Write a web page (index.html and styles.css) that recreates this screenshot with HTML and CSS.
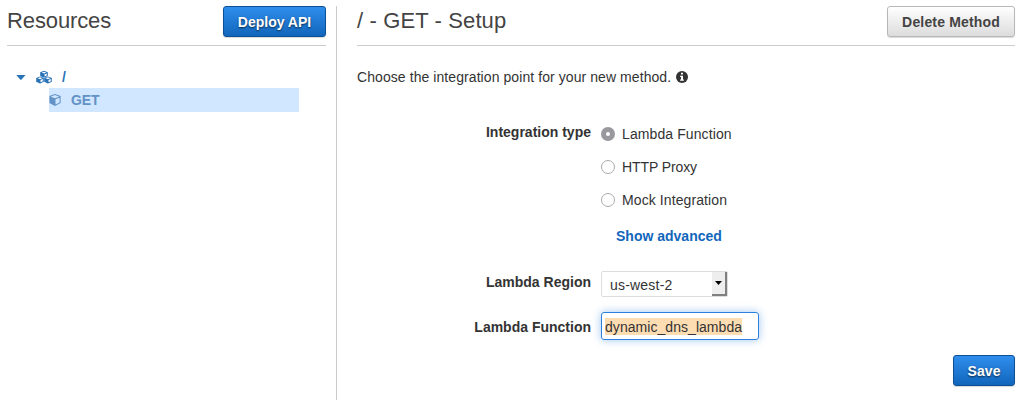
FILE: index.html
```html
<!DOCTYPE html>
<html lang="en">
<head>
<meta charset="utf-8">
<title>Method Setup</title>
<link rel="stylesheet" href="styles.css">
</head>
<body>
<div class="app">
  <aside class="sidebar">
    <header class="bar">
      <h1 class="title">Resources</h1>
      <button class="btn primary deploy">Deploy API</button>
    </header>
    <div class="tree">
      <div class="root">
        <svg class="caret" width="10" height="5" viewBox="0 0 10 5"><path d="M0.3 0h9.2L5.6 4.4q-.7.7-1.4 0z" fill="#2873b8"/></svg>
        <svg class="cubes" width="16" height="14" viewBox="0 0 16 14" fill="#2873b8" fill-rule="evenodd">
          <path d="M8 .8l3.8 1.5V6L8 7.8 4.2 6V2.3zM8 1.7L5.7 2.6 8 3.6l2.3-1zM8.5 4.4v2.1l2.3-1.1V3.4z"/>
          <path d="M4 6.4l3.8 1.5v3.9L4 13.6.2 11.8V7.9zM4 7.3L1.7 8.2 4 9.2l2.3-1zM4.5 10v2.3l2.3-1.1V9z"/>
          <path d="M12 6.4l3.8 1.5v3.9L12 13.6l-3.8-1.8V7.9zM12 7.3l-2.3.9 2.3 1 2.3-1zM12.5 10v2.3l2.3-1.1V9z"/>
        </svg>
        <span class="path">/</span>
      </div>
      <div class="method">
        <svg class="cube" width="12" height="12" viewBox="0 0 12 12" fill="#6292c6" fill-rule="evenodd"><path d="M6 0l5.6 2.1v7L6 12 .4 9.1v-7zM6 1L1.6 2.7 6 4.3l4.4-1.6zM6.5 5.2v5.4l4.1-2.1V3.7z"/></svg>
        <span>GET</span>
      </div>
    </div>
  </aside>
  <main class="main">
    <header class="bar">
      <h1 class="title setup">/ - GET - Setup</h1>
      <button class="btn plain">Delete Method</button>
    </header>
    <p class="intro"><span class="intro-text">Choose the integration point for your new method.</span>
      <svg width="12" height="12" viewBox="0 0 12 12"><circle cx="6" cy="6" r="6" fill="#333"/><path d="M5 1.8h2v1.7H5zM4.1 4.7H7v3.8h.9v1.3H4.1V8.5H5V6h-.9z" fill="#fff"/></svg>
    </p>
    <div class="form">
      <div class="row types">
        <span class="label">Integration type</span>
        <div class="options">
          <label class="option"><i class="radio on"></i><span class="wide">Lambda Function</span></label>
          <label class="option"><i class="radio"></i><span class="narrow">HTTP Proxy</span></label>
          <label class="option"><i class="radio"></i><span class="wide">Mock Integration</span></label>
          <a class="advanced">Show advanced</a>
        </div>
      </div>
      <div class="row region">
        <span class="label">Lambda Region</span>
        <div class="select"><span class="value">us-west-2</span><span class="drop"><svg width="7" height="4" viewBox="0 0 7 4"><path d="M0 0h7L3.5 4z"/></svg></span></div>
      </div>
      <div class="row function">
        <span class="label">Lambda Function</span>
        <div class="input"><span class="selected">dynamic_dns_lambda</span></div>
      </div>
    </div>
    <div class="actions"><button class="btn primary save">Save</button></div>
  </main>
</div>
</body>
</html>
```
FILE: styles.css
```css
* { box-sizing: border-box; }
body {
  margin: 0;
  background: #fff;
  color: #333;
  font: 14px/20px "Liberation Sans", Arial, sans-serif;
  white-space: nowrap;
}
.app { display: flex; height: 400px; padding: 6px 9px 0 7px; overflow: hidden; }
.sidebar { width: 330px; padding-right: 10px; border-right: 1px solid #ccc; }
.main { flex: 1; padding-left: 20px; }
.bar {
  display: flex;
  justify-content: space-between;
  align-items: flex-start;
  height: 40px;
  border-bottom: 1px solid #ccc;
}
.title { margin: 0; font-size: 22px; line-height: 30px; font-weight: 400; color: #444; letter-spacing: -.12px; }
.setup { letter-spacing: .12px; }
.btn {
  height: 31px;
  padding: 1px 0 0;
  border-radius: 3px;
  font: bold 14px/28px "Liberation Sans", Arial, sans-serif;
  text-align: center;
}
.primary {
  border: 1px solid #0d4f94;
  background: linear-gradient(#2f8eed, #1166bb);
  color: #fff;
  text-shadow: 0 1px 2px rgba(0, 0, 0, .65);
  box-shadow: 0 1px 1px rgba(0, 0, 0, .15);
}
.plain {
  width: 128px;
  border: 1px solid #b8b8b8;
  background: linear-gradient(#fff, #dcdcdc);
  color: #444;
  box-shadow: 0 1px 1px rgba(0, 0, 0, .15);
  letter-spacing: .16px;
}
.deploy { width: 103px; }
.save { width: 62px; letter-spacing: .1px; }
.tree { padding: 20px 0 0 9px; font-weight: bold; }
.root { display: flex; align-items: center; height: 22px; color: #2873b8; }
.cubes { margin: 0 10px 0 10px; }
.method {
  display: flex;
  align-items: center;
  gap: 10px;
  width: 250px;
  height: 24px;
  margin-left: 33px;
  background: #d1e7ff;
  color: #6292c6;
}
.method span { letter-spacing: -.15px; }
.intro { display: flex; align-items: center; gap: 5px; height: 20px; margin: 21px 0 0; }
.intro-text { letter-spacing: .075px; }
.form { padding-top: 35px; }
.row { display: flex; gap: 10px; }
.label { width: 234px; text-align: right; font-weight: bold; }
.types { height: 148px; }
.options { display: flex; flex-direction: column; padding-top: 2px; }
.option { display: flex; align-items: center; gap: 7px; height: 20px; margin-bottom: 13px; }
.wide { letter-spacing: .1px; }
.narrow { letter-spacing: -.1px; }
.radio { width: 14px; height: 14px; border: 1px solid #aaa; border-radius: 50%; background: #fff; }
.radio.on { border: 5px solid #98989d; }
.advanced { margin: 3px 0 0 15px; color: #1166bb; font-weight: bold; }
.region { height: 42px; }
.region .label { padding-top: 2px; }
.select {
  display: flex;
  justify-content: space-between;
  width: 127px;
  height: 26px;
  margin-top: 1px;
  border: 1px solid #ddd;
  border-radius: 2px;
}
.value { padding: 3px 0 0 8px; letter-spacing: .2px; }
.drop {
  display: flex;
  align-items: center;
  justify-content: center;
  width: 15px;
  height: 24px;
  border-right: 2px solid #808080;
  border-bottom: 2px solid #808080;
  background: #eee;
}
.function .label { padding-top: 5px; }
.input {
  width: 158px;
  height: 28px;
  padding: 5px 3px;
  border: 1px solid #2a80dc;
  border-radius: 3px;
  box-shadow: 0 0 8px rgba(42, 128, 220, .45);
  line-height: 18px;
}
.selected { display: block; width: 137px; height: 17px; background: #ffddb3; letter-spacing: .05px; }
.actions { display: flex; justify-content: flex-end; padding-top: 15px; }
```
